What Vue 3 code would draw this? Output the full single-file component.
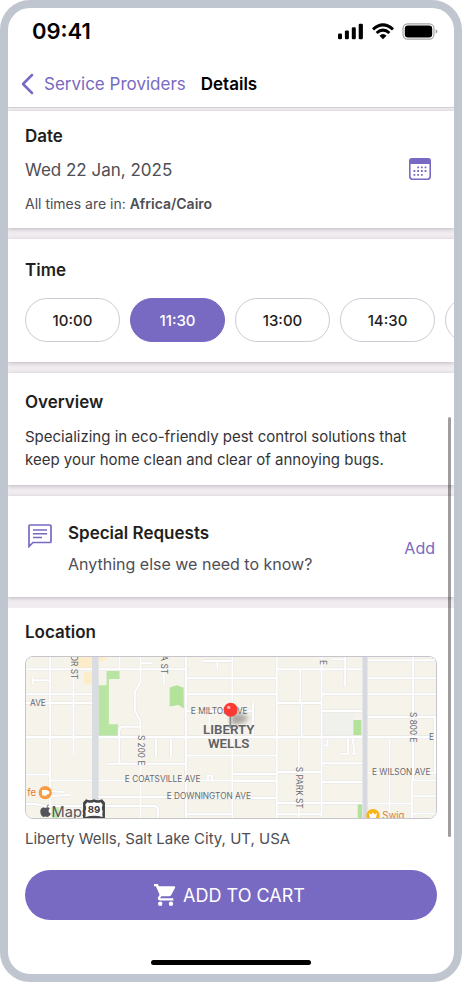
<script setup>
import { ref } from 'vue'

const times = ['10:00', '11:30', '13:00', '14:30', '16:00']
const selected = ref('11:30')

const minorRoads = [
  'M148 33V519', 'M218 95V330', 'M420 33V110L403 138V196L420 226V519', 'M490 80V118', 'M557 33V519',
  'M75 70H275M292 70H557', 'M95 92V115M95 103H148', 'M75 145H275', 'M75 172H275',
  'M420 243H368Q356 243 356 255V355', 'M318 355H557', 'M467 280V333', 'M512 280V333',
  'M75 387H148V405H275M292 405H830', 'M148 437L190 440M148 452L208 449', 'M75 476H105L130 482H275',
  'M292 455H557M557 458H830', 'M292 482H460Q473 482 473 495V519', 'M557 507H693',
  'M607 45H693M652 45V70', 'M357 33V70M420 52H455', 'M557 97H830', 'M557 145H830', 'M557 196H760', 'M628 200V238', 'M759 170V270',
  'M557 330H830', 'M623 405V390H636V405', 'M697 33V519', 'M697 386H830', 'M697 407H830',
  'M831 33V519', 'M966 33V519', 'M831 70H1090', 'M902 70V172M906 172V275', 'M831 172H966', 'M897 280V519',
  'M831 380H966', 'M831 473H1090', 'M831 507H966',
  'M1000 40H1038M1037 33V120', 'M966 145H1090', 'M966 196H1090', 'M971 300H984V280', 'M966 353H1090', 'M966 410H1090',
  'M1046 280V325M1025 325H1046M1060 280L1066 325M1056 325H1068',
  'M1105 43H1311', 'M1105 97H1311', 'M1105 145H1311', 'M1105 214H1311', 'M1242 33V400L1238 410V519',
  'M1105 382H1311', 'M1171 280V519', 'M1105 475H1240', 'M1240 405H1311', 'M1240 453H1311', 'M1240 505H1311', 'M1308 214V382'
].join('')
</script>

<template>
  <div class="device">
    <div class="status">
      <span class="clock">09:41</span>
      <div class="status-icons">
        <svg width="26" height="17" viewBox="0 0 26 17" aria-hidden="true">
          <rect x="0" y="10.4" width="4" height="5.8" rx="1.2" />
          <rect x="6.9" y="7.4" width="4" height="8.8" rx="1.2" />
          <rect x="13.8" y="4.2" width="4" height="12" rx="1.2" />
          <rect x="20.7" y="0.8" width="4.2" height="15.4" rx="1.2" />
        </svg>
        <svg width="22" height="17" viewBox="0 0 22 17" aria-hidden="true" fill="none" stroke="#000" stroke-width="3">
          <path d="M1 6.3Q11-2.5 21 6.3" />
          <path d="M4.6 10Q11 4.2 17.4 10" />
          <path d="M7.5 12.7Q11 9.4 14.5 12.7L11 16.2Z" fill="#000" stroke="none" />
        </svg>
        <svg width="36" height="17" viewBox="0 0 36 17" aria-hidden="true">
          <rect x="1" y="0.8" width="31" height="15.4" rx="4.6" fill="none" stroke="#a5a5a5" stroke-width="1.2" />
          <rect x="2.8" y="2.5" width="27.4" height="12" rx="3.2" />
          <path d="M33.6 6.2Q35.5 7 35.5 8.5T33.6 10.8Z" fill="#a5a5a5" />
        </svg>
      </div>
    </div>

    <header class="nav">
      <a class="back" href="#">
        <svg width="14" height="22" viewBox="0 0 14 22" aria-hidden="true">
          <path d="M12 2L3 11L12 20" fill="none" stroke="#7869c2" stroke-width="2.5" stroke-linecap="round" stroke-linejoin="round" />
        </svg>
        <span>Service Providers</span>
      </a>
      <h1>Details</h1>
    </header>

    <main class="content">
      <section class="card date-card">
        <div class="date-info">
          <h2>Date</h2>
          <p class="date">Wed 22 Jan, 2025</p>
          <p class="zone">All times are in: <b>Africa/Cairo</b></p>
        </div>
        <button class="calendar" type="button" aria-label="Choose date">
          <svg width="24" height="24" viewBox="0 0 24 24" aria-hidden="true">
            <rect x="1.8" y="1.8" width="20.4" height="20.4" rx="2.6" fill="#fff" stroke="#7869c2" stroke-width="1.6" />
            <path d="M1.2 7V4Q1.2 1.2 4 1.2H20Q22.8 1.2 22.8 4V7Z" fill="#7869c2" />
            <path d="M9.2 10.3h1.8M12.9 10.3h1.8M16.6 10.3h1.8M5.5 14h1.8M9.2 14h1.8M12.9 14h1.8M16.6 14h1.8M5.5 17.8h1.8M9.2 17.8h1.8M12.9 17.8h1.8" stroke="#7869c2" stroke-width="1.8" />
          </svg>
        </button>
      </section>

      <section class="card time-card">
        <h2>Time</h2>
        <div class="slots">
          <button
            v-for="t in times"
            :key="t"
            type="button"
            class="slot"
            :class="{ active: t === selected }"
            :aria-pressed="t === selected"
            @click="selected = t"
          >{{ t }}</button>
        </div>
      </section>

      <section class="card overview">
        <h2>Overview</h2>
        <p>Specializing in eco-friendly pest control solutions that keep your home clean and clear of annoying bugs.</p>
      </section>

      <section class="card requests">
        <svg width="24" height="24" viewBox="0 0 24 24" aria-hidden="true" fill="none" stroke="#7869c2">
          <path d="M1 22.5V2Q1 1 2 1H22Q23 1 23 2V17.5Q23 18.5 22 18.5H5Z" stroke-width="1.7" />
          <path d="M5 6H19M5 9.8H19M5 13.6H14" stroke-width="1.5" />
        </svg>
        <div class="request-text">
          <h2>Special Requests</h2>
          <p>Anything else we need to know?</p>
        </div>
        <button class="add" type="button">Add</button>
      </section>

      <section class="card location">
        <h2>Location</h2>
        <div class="map">
          <svg viewBox="75 33 1236 486" role="img" aria-label="Map of Liberty Wells">
            <defs>
              <filter id="soft" x="-50%" y="-50%" width="200%" height="200%"><feGaussianBlur stdDeviation="8" /></filter>
            </defs>
            <rect x="75" y="33" width="1236" height="486" fill="#f6f3eb" />
            <path d="M228 33H275V66H228ZM250 80H275V115H250ZM293 33H325L300 50Z" fill="#fcecc9" />
            <path d="M966 200H1065V270H966Z" fill="#f0f1ec" />
            <path d="M293 118H318V75H357V99H325V236H352V271H293Z" fill="#b9e5a2" />
            <path d="M508 125L530 118L550 126L551 188L534 178L508 182Z" fill="#b3e39b" />
            <path d="M1062 223H1086V268H1062ZM1075 474H1091V519H1075Z" fill="#b3e39b" />
            <path d="M152 484H175V519H152Z" fill="#c9eab5" />
            <g fill="none" stroke-linejoin="round">
              <path :d="minorRoads" stroke="#e3e3e4" stroke-width="9" />
              <path d="M75 275H1311" stroke="#dfe0e2" stroke-width="10" />
              <path :d="minorRoads" stroke="#fff" stroke-width="6" />
              <path d="M75 275H1311" stroke="#fff" stroke-width="7" />
              <path d="M284 33V519" stroke="#d9dce0" stroke-width="20" />
              <path d="M1097 33V519" stroke="#d5d7dc" stroke-width="17" />
              <path d="M1090 33V519M1104 33V519" stroke="#e4e5e8" stroke-width="4" />
            </g>
            <path d="M693 205Q715 198 745 213Q745 235 693 238Z" fill="#77746f" opacity=".6" filter="url(#soft)" />
            <g class="road-label">
              <text x="87" y="180">AVE</text>
              <text x="572" y="204">E MILTON AVE</text>
              <text x="373" y="410">E COATSVILLE AVE</text>
              <text x="499" y="462">E DOWNINGTON AVE</text>
              <text x="1118" y="388">E WILSON AVE</text>
              <text x="1290" y="282">E</text>
              <text transform="translate(210 26) rotate(90)">OR ST</text>
              <text transform="translate(482 28) rotate(90)">A ST</text>
              <text transform="translate(414 268) rotate(90)">S 200 E</text>
              <text transform="translate(890 364) rotate(90)">S PARK ST</text>
              <text transform="translate(1234 199) rotate(90)">S 800 E</text>
              <text transform="translate(961 42) rotate(90)">E</text>
            </g>
            <g class="place-label">
              <text x="686" y="264">LIBERTY</text>
              <text x="686" y="308">WELLS</text>
            </g>
            <path d="M691 205V248" stroke="#8c8c8f" stroke-width="5" />
            <circle cx="692" cy="192" r="21" fill="#fb3b33" />
            <circle cx="686" cy="185" r="5" fill="#ffb4ad" />
            <text class="poi" x="79" y="451">fe</text>
            <circle cx="133" cy="442" r="20" fill="#f89b43" />
            <path d="M123 434H140V437H145V446H140Q139 451 134 451H129Q123 451 123 445Z" fill="#fff" />
            <text class="poi" x="1149" y="522">Swig</text>
            <circle cx="1121" cy="511" r="20" fill="#f8b417" />
            <path d="M1109 503L1116 508L1121 501L1126 508L1133 503L1130 519H1112Z" fill="#fff" />
            <path d="M137 485Q138 479 144 478Q143 485 137 485ZM134 488Q140 484 147 489Q142 493 143 499Q145 504 150 505Q146 515 139 515Q133 512 128 515Q118 512 118 498Q120 486 128 487Z" fill="#55565a" />
            <text class="brand" x="152" y="516">Maps</text>
            <path d="M256 462Q268 468 280 462Q292 468 304 462L313 472V519H247V472Z" fill="#444548" />
            <path d="M260 471Q270 475 280 470Q291 475 300 471L306 478Q301 488 306 499Q304 508 306 515Q280 508 254 515Q256 508 254 499Q259 488 254 478Z" fill="#fff" />
            <text class="shield" x="280" y="503">89</text>
          </svg>
        </div>
        <p>Liberty Wells, Salt Lake City, UT, USA</p>
      </section>
      <div class="scroll-thumb"></div>
    </main>

    <footer class="bottom">
      <button class="cart" type="button">
        <svg width="24" height="24" viewBox="0 0 24 24" aria-hidden="true" fill="#fff">
          <path d="M1 1H4.9L5.9 3.2H21.2Q22.8 3.3 22.1 4.8L18.2 12Q17.5 13.2 16.2 13.2H8.2L7.1 15.3H20.3V17.5H7Q4.2 17 5 14.6L6.6 11.8L2.9 3.2H1Z" />
          <circle cx="7.2" cy="20.8" r="2.2" />
          <circle cx="18" cy="20.8" r="2.2" />
        </svg>
        <span>ADD TO CART</span>
      </button>
      <div class="home-bar"></div>
    </footer>
  </div>
</template>

<style>
body {
  margin: 0;
  background: #fff;
}
</style>

<style scoped>
* {
  box-sizing: border-box;
}

.device {
  display: flex;
  flex-direction: column;
  min-height: 100vh;
  border: 8px solid #bfc6cf;
  border-radius: 30px;
  background: #fff;
  overflow: hidden;
  font-family: Inter, "Liberation Sans", sans-serif;
  color: #1f1f21;
}

h1, h2, p {
  margin: 0;
}

button {
  border: 0;
  padding: 0;
  background: none;
  font-family: inherit;
  cursor: pointer;
}

svg {
  display: block;
  flex: none;
}

.status {
  display: flex;
  align-items: center;
  justify-content: space-between;
  height: 46px;
  padding: 0 16px 0 24px;
}

.clock {
  font-size: 22px;
  font-weight: 600;
  color: #000;
}

.status-icons {
  display: flex;
  gap: 8px;
}

.nav {
  display: flex;
  align-items: center;
  gap: 15px;
  height: 54px;
  padding: 6px 12px 0;
  border-bottom: 1px solid #d0cfd3;
}

.back {
  display: flex;
  align-items: center;
  gap: 10px;
  color: #7869c2;
  font-size: 17px;
  text-decoration: none;
}

h1 {
  font-size: 17px;
  font-weight: 600;
  color: #000;
}

h2 {
  font-size: 17px;
  font-weight: 600;
  line-height: 24px;
}

.content {
  position: relative;
  display: flex;
  flex-direction: column;
  gap: 11px;
  padding-top: 3px;
  background: #f1ecf0;
}

.card {
  padding: 17px;
  background: #fff;
  box-shadow: 0 1px 4px rgba(60, 50, 65, 0.28);
}

.date-card {
  display: flex;
  align-items: center;
  justify-content: space-between;
  padding: 13px 22px 14px 17px;
}

.date {
  margin-top: 9px;
  font-size: 17px;
  line-height: 26px;
  color: #4e4e54;
}

.zone {
  margin-top: 11px;
  font-size: 14px;
  line-height: 20px;
  color: #4e4e54;
}

.zone b {
  font-weight: 600;
}

.time-card {
  padding: 19px 0 20px 17px;
}

.slots {
  display: flex;
  gap: 10px;
  margin-top: 16px;
  overflow-x: auto;
  scrollbar-width: none;
}

.slot {
  flex: none;
  width: 95px;
  height: 44px;
  border: 1px solid #cdcbd4;
  border-radius: 22px;
  font-size: 15px;
  font-weight: 500;
  color: #1f1f21;
}

.slot.active {
  border-color: #7869c2;
  background: #7869c2;
  color: #fff;
}

.overview {
  padding-bottom: 14px;
}

.overview p {
  margin-top: 11px;
  font-size: 15px;
  line-height: 23px;
  color: #343438;
}

.requests {
  display: flex;
  align-items: center;
  padding: 25px 19px 22px 20px;
}

.requests > svg {
  align-self: flex-start;
  margin-top: 3px;
}

.request-text {
  flex: 1;
  padding-left: 16px;
}

.request-text p {
  margin-top: 8px;
  font-size: 16px;
  line-height: 22px;
  color: #4e4e54;
}

.add {
  font-size: 16px;
  color: #7869c2;
}

.location {
  padding: 12px 17px 8px;
  box-shadow: none;
}

.map {
  margin-top: 12px;
  border: 1px solid #c6c5cc;
  border-radius: 8px;
  overflow: hidden;
}

.map svg {
  width: 100%;
  height: auto;
}

.road-label {
  font-size: 25px;
  fill: #68686c;
}

.place-label {
  font-family: Roboto, "Liberation Sans", sans-serif;
  font-size: 40px;
  font-weight: 600;
  fill: #5f6064;
  text-anchor: middle;
  paint-order: stroke;
  stroke: #f6f3eb;
  stroke-width: 3px;
}

.poi {
  font-size: 29px;
  fill: #df7d35;
}

.brand {
  font-size: 44px;
  fill: #55565a;
}

.shield {
  font-size: 29px;
  font-weight: 700;
  fill: #3a3a3d;
  text-anchor: middle;
}

.location p {
  margin-top: 10px;
  font-size: 15px;
  line-height: 20px;
  color: #4e4e54;
}

.scroll-thumb {
  position: absolute;
  right: 3px;
  top: 309px;
  bottom: 20px;
  width: 3px;
  border-radius: 2px;
  background: rgba(0, 0, 0, 0.38);
}

.bottom {
  display: flex;
  flex: 1;
  flex-direction: column;
  align-items: center;
  justify-content: space-between;
  padding: 13px 17px 9px;
}

.cart {
  display: flex;
  align-items: center;
  justify-content: center;
  gap: 6px;
  width: 100%;
  height: 50px;
  padding-right: 4px;
  border-radius: 25px;
  background: #7869c2;
  color: #fff;
  font-size: 18px;
}

.home-bar {
  width: 160px;
  height: 5px;
  border-radius: 3px;
  background: #000;
}
</style>
